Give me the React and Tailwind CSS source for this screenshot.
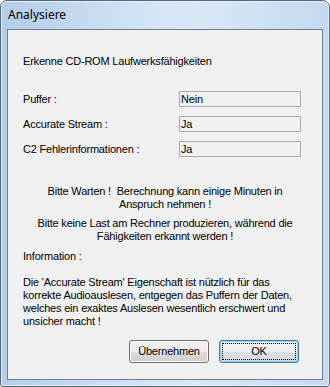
export default function App() {
  const rows = [
    { label: 'Puffer :', value: 'Nein' },
    { label: 'Accurate Stream :', value: 'Ja' },
    { label: 'C2 Fehlerinformationen :', value: 'Ja' },
  ];

  return (
    <div className="w-[330px] h-[387px] bg-white">
      <div className="w-[330px] h-[387px] flex flex-col rounded-t-[7px] rounded-b-[3px] border border-[#55657a] bg-[linear-gradient(90deg,#b4cdea_0%,#d3e4f6_45%,#d9e8f7_60%,#c4d9f0_100%)] shadow-[inset_0_0_0_1px_#e8f1fb]">
        {/* title bar */}
        <div className="h-[28px] flex items-center pl-[7px] text-[12px] text-black font-['Noto_Sans','Liberation_Sans',sans-serif]">
          Analysiere
        </div>

        {/* client area */}
        <div className="mx-[6px] mb-[6px] flex-1 border border-[#6f7d8c] bg-[#f0f0f0] font-['Liberation_Sans',Arial,sans-serif] text-[11px] leading-[13px] tracking-[-0.2px] text-black">
          <div className="pl-[15px] pt-[25px]">Erkenne CD-ROM Laufwerksfähigkeiten</div>

          <div className="flex flex-col gap-[9px] mt-[23px]">
            {rows.map((r) => (
              <div key={r.label} className="flex items-center h-[16px]">
                <div className="w-[171px] pl-[15px]">{r.label}</div>
                <div className="w-[122px] h-[16px] border border-[#a9a9a9] bg-[#f0f0f0] pl-[1px] flex items-center">
                  {r.value}
                </div>
              </div>
            ))}
          </div>

          <div className="mt-[28px] text-center whitespace-nowrap">
            Bitte Warten !&nbsp; Berechnung kann einige Minuten in
            <br />
            Anspruch nehmen !
          </div>
          <div className="mt-[6px] text-center whitespace-nowrap">
            Bitte keine Last am Rechner produzieren, während die
            <br />
            Fähigkeiten erkannt werden !
          </div>
          <div className="mt-[7px] pl-[15px]">Information :</div>
          <div className="mt-[13px] pl-[15px] whitespace-nowrap">
            Die 'Accurate Stream' Eigenschaft ist nützlich für das
            <br />
            korrekte Audioauslesen, entgegen das Puffern der Daten,
            <br />
            welches ein exaktes Auslesen wesentlich erschwert und
            <br />
            unsicher macht !
          </div>

          <div className="flex justify-end gap-[10px] pr-[23px] mt-[12px]">
            <button className="w-[80px] h-[23px] rounded-[3px] border border-[#707070] bg-[linear-gradient(180deg,#f2f2f2_0%,#ebebeb_50%,#dddddd_51%,#cfcfcf_100%)] shadow-[inset_0_0_0_1px_#fbfbfb] text-[11px] text-black">
              Übernehmen
            </button>
            <button className="w-[80px] h-[23px] rounded-[3px] border border-[#3c7fb1] bg-[linear-gradient(180deg,#f4f6f8_0%,#eceff2_50%,#dfe3e7_51%,#d3d9de_100%)] shadow-[inset_0_0_0_1px_#8fd0f2] p-[2px] text-[11px] text-black">
              <span className="flex h-full w-full items-center justify-center border border-dotted border-black">
                OK
              </span>
            </button>
          </div>
        </div>
      </div>
    </div>
  );
}
